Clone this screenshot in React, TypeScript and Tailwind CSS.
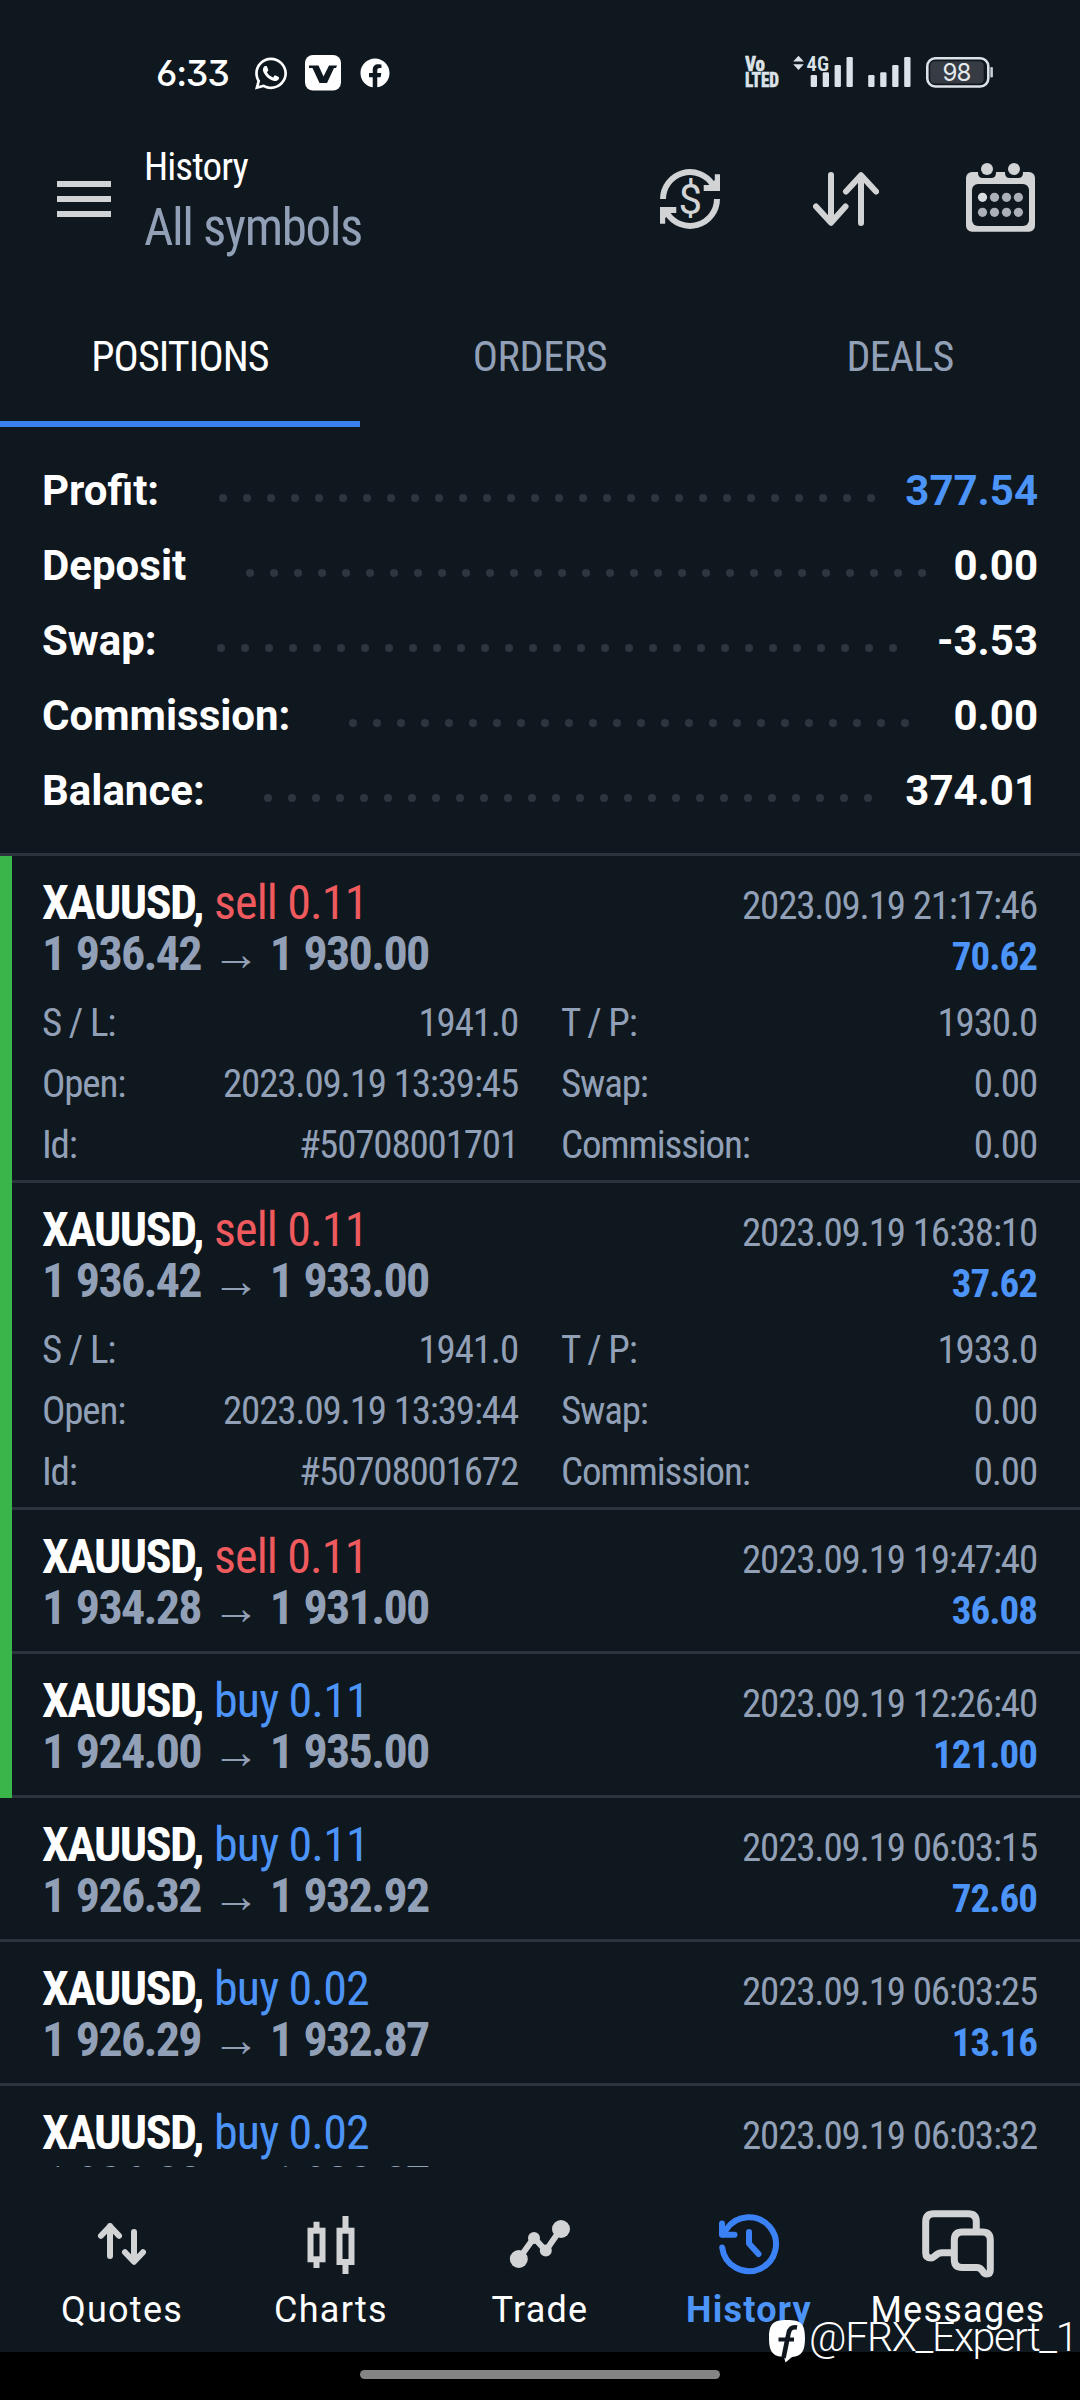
import React from 'react';
import clsx from 'clsx';
import { FaWhatsapp, FaFacebook } from 'react-icons/fa';

interface SummaryRow {
  label: string;
  value: string;
  dots: number;
  labelWidth: string;
  highlight?: boolean;
}

interface Position {
  id: number;
  side: 'buy' | 'sell';
  volume: string;
  open: string;
  close: string;
  time: string;
  profit: string;
  marked?: boolean;
  details?: [string, string, string, string][];
}

const summary: SummaryRow[] = [
  { label: 'Profit:', value: '377.54', dots: 28, labelWidth: 'w-[177px]', highlight: true },
  { label: 'Deposit', value: '0.00', dots: 29, labelWidth: 'w-[204px]' },
  { label: 'Swap:', value: '-3.53', dots: 29, labelWidth: 'w-[175px]' },
  { label: 'Commission:', value: '0.00', dots: 24, labelWidth: 'w-[307px]' },
  { label: 'Balance:', value: '374.01', dots: 26, labelWidth: 'w-[222px]' },
];

const positions: Position[] = [
  {
    id: 1, side: 'sell', volume: '0.11', open: '1 936.42', close: '1 930.00',
    time: '2023.09.19 21:17:46', profit: '70.62', marked: true,
    details: [
      ['S / L:', '1941.0', 'T / P:', '1930.0'],
      ['Open:', '2023.09.19 13:39:45', 'Swap:', '0.00'],
      ['Id:', '#50708001701', 'Commission:', '0.00'],
    ],
  },
  {
    id: 2, side: 'sell', volume: '0.11', open: '1 936.42', close: '1 933.00',
    time: '2023.09.19 16:38:10', profit: '37.62', marked: true,
    details: [
      ['S / L:', '1941.0', 'T / P:', '1933.0'],
      ['Open:', '2023.09.19 13:39:44', 'Swap:', '0.00'],
      ['Id:', '#50708001672', 'Commission:', '0.00'],
    ],
  },
  { id: 3, side: 'sell', volume: '0.11', open: '1 934.28', close: '1 931.00', time: '2023.09.19 19:47:40', profit: '36.08', marked: true },
  { id: 4, side: 'buy', volume: '0.11', open: '1 924.00', close: '1 935.00', time: '2023.09.19 12:26:40', profit: '121.00', marked: true },
  { id: 5, side: 'buy', volume: '0.11', open: '1 926.32', close: '1 932.92', time: '2023.09.19 06:03:15', profit: '72.60' },
  { id: 6, side: 'buy', volume: '0.02', open: '1 926.29', close: '1 932.87', time: '2023.09.19 06:03:25', profit: '13.16' },
  { id: 7, side: 'buy', volume: '0.02', open: '1 926.28', close: '1 932.87', time: '2023.09.19 06:03:32', profit: '13.18' },
];

const StatusBar: React.FC = () => (
  <div className="flex h-[141px] items-center justify-between pt-[5px] pr-[87px] pl-[156px] text-white">
    <div className="flex items-center">
      <span className="w-[99px] font-['Inter'] text-[36px] leading-[48px] font-medium tracking-[-1.2px] [font-feature-settings:'cv03','cv09']">
        6:33
      </span>
      <FaWhatsapp className="h-[37px] w-[32px]" />
      <svg viewBox="0 0 36 36" className="ml-[18px] h-9 w-9">
        <rect width="36" height="35.5" rx="8" fill="#fff" />
        <path d="M4 10.5H13.5L18.5 21.5L24 10.5H32L31 13H29L22 28H14.5L7.5 13H4Z" fill="#0f171f" />
      </svg>
      <FaFacebook className="ml-[19px] h-[30px] w-[30px]" />
    </div>

    <div className="flex items-center">
      {/* VoLTE */}
      <svg viewBox="0 0 34 36" className="h-9 w-[34px] font-['Roboto_Condensed']" fill="#dbe3e8" stroke="#dbe3e8" strokeWidth=".5">
        <text x="0" y="16.2" fontSize="20" fontWeight="800" textLength="20" lengthAdjust="spacingAndGlyphs">Vo</text>
        <text x="0" y="32" fontSize="20" fontWeight="800" textLength="34" lengthAdjust="spacingAndGlyphs">LTED</text>
      </svg>
      {/* Mobile data */}
      <svg viewBox="0 0 60 36" className="ml-[14px] h-9 w-[60px]" fill="#dbe3e8">
        <path d="M5.5 .8L10.8 6.6H.2ZM5.5 15L.2 9.2H10.8Z" />
        <text
          x="13.5" y="15.8" fontSize="21" fontWeight="600" textLength="22.5" lengthAdjust="spacingAndGlyphs"
          className="font-['Roboto_Condensed']"
        >
          4G
        </text>
        <rect x="17.7" y="20" width="6.3" height="12" rx="1.2" />
        <rect x="29.7" y="17.3" width="6.3" height="14.7" rx="1.2" />
        <rect x="41.6" y="10" width="6.3" height="22" rx="1.2" />
        <rect x="53.5" y="2" width="6.3" height="30" rx="1.2" />
      </svg>
      <svg viewBox="0 0 43 36" className="ml-[14.5px] h-9 w-[43px]" fill="#dbe3e8">
        <rect x=".2" y="20" width="6.3" height="12" rx="1.2" />
        <rect x="12.2" y="17.3" width="6.3" height="14.7" rx="1.2" />
        <rect x="24.2" y="10" width="6.3" height="22" rx="1.2" />
        <rect x="36.2" y="2" width="6.3" height="30" rx="1.2" />
      </svg>
      {/* Battery */}
      <svg viewBox="0 0 67 36" className="ml-[15.5px] h-9 w-[67px]">
        <rect x="1.3" y="3.3" width="61" height="28.2" rx="8" fill="none" stroke="#dbe3e8" strokeWidth="2.6" />
        <rect x="4.2" y="6.2" width="53.5" height="22.4" rx="4.5" fill="#363b44" />
        <rect x="64.3" y="12" width="2.6" height="10.5" rx="1" fill="#c8ced4" />
        <text x="30.6" y="26.4" fontSize="24" textAnchor="middle" letterSpacing="-.8" fill="#e4e9ee" className="font-['Inter']">
          98
        </text>
      </svg>
    </div>
  </div>
);

const Header: React.FC = () => (
  <div className="h-[151px]">
    <div className="flex h-[116px] items-center pr-[45px] pl-[57px]">
      <div className="flex w-[54px] flex-col gap-[9px]">
        <span className="h-[6px] bg-[#d2d3d5]" />
        <span className="h-[6px] bg-[#d2d3d5]" />
        <span className="h-[6px] bg-[#d2d3d5]" />
      </div>
      <div className="ml-[33px] flex flex-1 flex-col self-start whitespace-nowrap">
        <span className="text-[39px] leading-[52px] tracking-[-0.88px] text-white">History</span>
        <span className="text-[51px] leading-[70px] tracking-[-1.39px] text-[#91a0b6]">All symbols</span>
      </div>
      <svg viewBox="0 0 60 60" className="h-[60px] w-[60px]" fill="#d2d3d5">
        <path d="M3 30A27 27 0 0 1 53 16M57 30A27 27 0 0 1 7 44" fill="none" stroke="#d2d3d5" strokeWidth="6" />
        <path d="M60 5.3V22H43.7V16H49.5L54.8 11V5.3ZM0 54.7V38H16.3V44H10.5L5.2 49V54.7Z" />
        <text x="30.3" y="45" fontSize="42" fontWeight="450" textAnchor="middle" className="font-['Roboto']">$</text>
      </svg>
      <svg
        viewBox="0 0 66 54" className="ml-[93px] h-[54px] w-[66px]"
        fill="none" stroke="#d2d3d5" strokeWidth="6" strokeLinecap="round" strokeLinejoin="round"
      >
        <path d="M18 3V50.5M3 34.5L18 50.8L32.5 34.5" />
        <path d="M48 51V3.5M33 19.5L48 3.2L63 19.5" />
      </svg>
      <svg viewBox="0 0 69 69" className="-mt-[3px] ml-[87px] h-[69px] w-[69px]">
        <rect y="9" width="69" height="59.7" rx="6" fill="#d2d3d5" />
        <rect x="6" y="21" width="57" height="42" rx="6" fill="#0f171f" />
        {[21, 48].map((x) => (
          <g key={x}>
            <path d={`M${x - 9} 6V10Q${x - 9} 15 ${x - 4} 15H${x + 4}Q${x + 9} 15 ${x + 9} 10V6Z`} fill="#0f171f" />
            <circle cx={x} cy="6" r="6" fill="#d2d3d5" />
          </g>
        ))}
        {[34.3, 49.3].map((y) =>
          [16.5, 28.5, 40.5, 52.4].map((x, i) => (
            <circle key={`${x}-${y}`} cx={x} cy={y} r="4.6" fill={i === 0 && y < 40 ? '#dadddf' : '#abb0b6'} />
          ))
        )}
      </svg>
    </div>
  </div>
);

const tabs = [
  { label: 'POSITIONS', spacing: 'tracking-[-0.9px]', active: true },
  { label: 'ORDERS', spacing: 'tracking-[-0.3px]' },
  { label: 'DEALS', spacing: 'tracking-[-0.8px]' },
];

const Tabs: React.FC = () => (
  <div className="grid h-[135px] grid-cols-3 text-center text-[42px] leading-[129px]">
    {tabs.map(({ label, spacing, active }) => (
      <div
        key={label}
        className={clsx('border-b-[6px]', spacing, active ? 'border-[#3a82f1] text-white' : 'border-transparent text-[#91a0b6]')}
      >
        {label}
      </div>
    ))}
  </div>
);

const Summary: React.FC = () => (
  <div className="h-[429px] border-b-[3px] border-[#2b333d] pt-[26px] pr-[42px] pl-[42px] font-['Roboto'] text-[42px] leading-[75px] font-bold">
    {summary.map((row) => (
      <div key={row.label} className="flex h-[75px] items-center">
        <span className={clsx('shrink-0', row.labelWidth)}>{row.label}</span>
        <div className="mt-[15px] flex gap-[16px]">
          {Array.from({ length: row.dots }, (_, i) => (
            <span key={i} className="h-[8px] w-[8px] rounded-full bg-[#2e353f]" />
          ))}
        </div>
        <span className={clsx('ml-auto', row.highlight && 'text-[#4c94f7]')}>{row.value}</span>
      </div>
    ))}
  </div>
);

const PositionItem: React.FC<{ position: Position }> = ({ position: p }) => (
  <div className="flex">
    {p.marked && <div className="w-[12px] shrink-0 bg-[#3ab54a]" />}
    <div
      className={clsx(
        'flex-1 border-b-[3px] border-[#2b333d] pt-[21px] pr-[43px] whitespace-nowrap',
        p.marked ? 'pl-[30px]' : 'pl-[42px]',
        p.details ? 'h-[327px]' : 'h-[144px]'
      )}
    >
      <div className="flex h-[51px] items-baseline justify-between leading-[51px]">
        <div className="flex items-baseline text-[48px]">
          <span className="w-[172px] font-bold tracking-[-1.55px]">XAUUSD,</span>
          <span className={clsx('tracking-[-0.85px]', p.side === 'sell' ? 'text-[#ee5a5e]' : 'text-[#4c94f7]')}>
            {p.side} {p.volume}
          </span>
        </div>
        <span className="text-[39px] tracking-[-1.17px] text-[#91a0b6]">{p.time}</span>
      </div>
      <div className="flex h-[51px] items-baseline justify-between leading-[51px] font-bold">
        <span className="text-[48px] tracking-[-1.7px] text-[#91a0b6] [word-spacing:1.9px]">
          {p.open} → {p.close}
        </span>
        <span className="text-[39px] tracking-[-1px] text-[#4c94f7]">{p.profit}</span>
      </div>

      {p.details && (
        <div className="mt-[14px] text-[39px] leading-[61px] tracking-[-1.17px] text-[#91a0b6]">
          {p.details.map(([l1, v1, l2, v2]) => (
            <div key={l1} className="flex gap-[43px]">
              <div className="flex w-[476px] justify-between">
                <span>{l1}</span>
                <span>{v1}</span>
              </div>
              <div className="flex flex-1 justify-between">
                <span>{l2}</span>
                <span>{v2}</span>
              </div>
            </div>
          ))}
        </div>
      )}
    </div>
  </div>
);

const QuotesIcon = () => (
  <g fill="none" stroke="#d2d3d5" strokeWidth="6" strokeLinecap="round" strokeLinejoin="round">
    <path d="M24 18V48M15 27.8L24 18.2L33 27.8" />
    <path d="M48 24V53.5M39 44.2L48 53.8L57 44.2" />
  </g>
);

const ChartsIcon = () => (
  <g fill="none" stroke="#d2d3d5" strokeWidth="6">
    <rect x="15.5" y="22.7" width="12" height="28.6" />
    <rect x="44.5" y="22.7" width="12" height="31.3" />
    <path d="M21.5 13.7V20M21.5 54V60M50.5 8V20M50.5 57V66" />
  </g>
);

const TradeIcon = () => (
  <g fill="#d2d3d5">
    <path d="M14.8 51L30 29.7L41.8 42.7L57 20.7" fill="none" stroke="#d2d3d5" strokeWidth="6" />
    <circle cx="14.8" cy="51" r="9" />
    <circle cx="30" cy="30" r="6" />
    <circle cx="41.8" cy="42.5" r="6" />
    <circle cx="57" cy="21" r="9" />
  </g>
);

const HistoryIcon = () => (
  <g fill="none" stroke="#3b82f6" strokeWidth="6" strokeLinecap="round" strokeLinejoin="round">
    <path d="M9.2 39.6A27 27 0 1 0 13.5 21.2L9.5 26.3" />
    <path d="M9 15.5V26.7H21.5" />
    <path d="M36 24V35.5L45.5 46" />
  </g>
);

const MessagesIcon = () => (
  <g fill="none" stroke="#d2d3d5" strokeWidth="7" strokeLinejoin="round">
    <path d="M54.3 24V13.7Q54.3 5.7 46.3 5.7H11.7Q3.7 5.7 3.7 13.7V45Q3.7 50 9 50C13 50 13.5 44.8 20 44.8H32" />
    <path d="M40.3 24H60.3Q68.3 24 68.3 32V62Q68.3 66 64.5 66C60 66 61.5 59.5 54.5 59.5H40.3Q32.3 59.5 32.3 51.5V32Q32.3 24 40.3 24Z" />
  </g>
);

const navItems = [
  { label: 'Quotes', Icon: QuotesIcon },
  { label: 'Charts', Icon: ChartsIcon },
  { label: 'Trade', Icon: TradeIcon },
  { label: 'History', Icon: HistoryIcon, active: true },
  { label: 'Messages', Icon: MessagesIcon },
];

const BottomNav: React.FC = () => (
  <div className="grid h-[185px] grid-cols-5 px-[17.5px] pt-[41px] font-['Roboto']">
    {navItems.map(({ label, Icon, active }) => (
      <div key={label} className="flex flex-col items-center gap-[9px]">
        <svg viewBox="0 0 72 72" className="h-[72px] w-[72px] shrink-0">
          <Icon />
        </svg>
        <span className={clsx('text-[36px] leading-[42px] tracking-[1.25px]', active ? 'font-bold text-[#4c94f7]' : 'text-white')}>
          {label}
        </span>
      </div>
    ))}
  </div>
);

const Watermark: React.FC = () => (
  <div className="absolute top-[2313px] left-[769px] flex items-start whitespace-nowrap">
    <svg viewBox="0 0 36 43" className="mt-[7px] h-[43px] w-9">
      <path d="M18 0C32 0 36 4 36 18C36 31 33 36 23 37C20 39.5 18 41.5 16.5 42.5L15 37C4 36.5 0 32 0 18C0 4 4 0 18 0Z" fill="#fff" />
      <path d="M28 7.5C22.5 6.5 20.3 9 19.4 14L14.5 38" fill="none" stroke="#10171e" strokeWidth="4.6" />
      <path d="M9.5 19.5H25" stroke="#10171e" strokeWidth="4" />
    </svg>
    <span className="ml-[4px] font-['Roboto'] text-[41px] leading-[48px] font-light tracking-[-1.3px] text-white">@FRX_Expert_1</span>
  </div>
);

const App: React.FC = () => (
  <div className="relative flex h-[2400px] w-[1080px] flex-col overflow-hidden bg-[#0f171f] font-['Roboto_Condensed',sans-serif] text-white">
    <StatusBar />
    <Header />
    <Tabs />
    <Summary />

    <div className="h-[1311px] overflow-hidden">
      {positions.map((position) => (
        <PositionItem key={position.id} position={position} />
      ))}
    </div>

    <BottomNav />

    {/* Gesture bar */}
    <div className="flex h-[48px] justify-center bg-black pt-[18px]">
      <div className="h-[9px] w-[360px] rounded-full bg-[#848484]" />
    </div>

    <Watermark />
  </div>
);

export default App;
